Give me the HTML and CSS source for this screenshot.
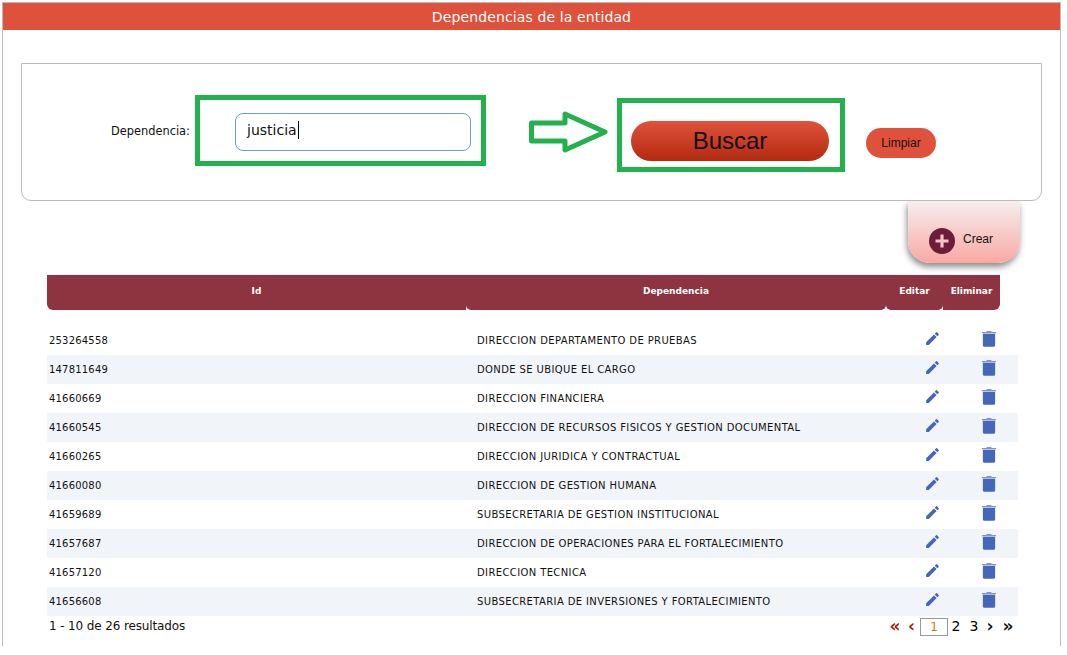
FILE: index.html
```html
<!DOCTYPE html>
<html lang="es">
<head>
<meta charset="utf-8">
<title>Dependencias de la entidad</title>
<link rel="stylesheet" href="styles.css">
</head>
<body>
<main class="frame">
  <h1 class="title">Dependencias de la entidad</h1>
  <section class="search">
    <label class="field-label" for="dep">Dependencia:</label>
    <div class="mark mark-input">
      <div class="input"><span class="input-text">justicia</span><span class="caret"></span></div>
    </div>
    <svg class="arrow" width="80" height="42" viewBox="0 0 80 42"><path d="M2.5 12H36V3L76 21 36 39V30H2.5Z" fill="#fff" stroke="#23b14d" stroke-width="5" stroke-linejoin="round"/></svg>
    <div class="mark mark-button"><button class="btn-search">Buscar</button></div>
    <button class="btn-clear">Limpiar</button>
  </section>
  <div class="create-row">
    <div class="create">
      <span class="create-icon"><svg width="26" height="26" viewBox="0 0 26 26"><circle cx="13" cy="13" r="13" fill="#6b1d3a"/><path d="M13 6.5v13M6.5 13h13" stroke="#f2c4c4" stroke-width="3.2"/></svg></span>
      <span>Crear</span>
    </div>
  </div>
  <div class="table-wrap">
    <div class="thead">
      <div class="th">Id</div>
      <div class="th">Dependencia</div>
      <div class="th">Editar</div>
      <div class="th">Eliminar</div>
    </div>
    <div class="tbody">
      <div class="tr"><span class="id">253264558</span><span class="dep">DIRECCION DEPARTAMENTO DE PRUEBAS</span><svg class="pencil" viewBox="0 0 24 24"><use href="#i-edit"/></svg><svg class="trash" viewBox="0 0 16 18"><use href="#i-trash"/></svg></div>
      <div class="tr"><span class="id">147811649</span><span class="dep">DONDE SE UBIQUE EL CARGO</span><svg class="pencil" viewBox="0 0 24 24"><use href="#i-edit"/></svg><svg class="trash" viewBox="0 0 16 18"><use href="#i-trash"/></svg></div>
      <div class="tr"><span class="id">41660669</span><span class="dep">DIRECCION FINANCIERA</span><svg class="pencil" viewBox="0 0 24 24"><use href="#i-edit"/></svg><svg class="trash" viewBox="0 0 16 18"><use href="#i-trash"/></svg></div>
      <div class="tr"><span class="id">41660545</span><span class="dep">DIRECCION DE RECURSOS FISICOS Y GESTION DOCUMENTAL</span><svg class="pencil" viewBox="0 0 24 24"><use href="#i-edit"/></svg><svg class="trash" viewBox="0 0 16 18"><use href="#i-trash"/></svg></div>
      <div class="tr"><span class="id">41660265</span><span class="dep">DIRECCION JURIDICA Y CONTRACTUAL</span><svg class="pencil" viewBox="0 0 24 24"><use href="#i-edit"/></svg><svg class="trash" viewBox="0 0 16 18"><use href="#i-trash"/></svg></div>
      <div class="tr"><span class="id">41660080</span><span class="dep">DIRECCION DE GESTION HUMANA</span><svg class="pencil" viewBox="0 0 24 24"><use href="#i-edit"/></svg><svg class="trash" viewBox="0 0 16 18"><use href="#i-trash"/></svg></div>
      <div class="tr"><span class="id">41659689</span><span class="dep">SUBSECRETARIA DE GESTION INSTITUCIONAL</span><svg class="pencil" viewBox="0 0 24 24"><use href="#i-edit"/></svg><svg class="trash" viewBox="0 0 16 18"><use href="#i-trash"/></svg></div>
      <div class="tr"><span class="id">41657687</span><span class="dep">DIRECCION DE OPERACIONES PARA EL FORTALECIMIENTO</span><svg class="pencil" viewBox="0 0 24 24"><use href="#i-edit"/></svg><svg class="trash" viewBox="0 0 16 18"><use href="#i-trash"/></svg></div>
      <div class="tr"><span class="id">41657120</span><span class="dep">DIRECCION TECNICA</span><svg class="pencil" viewBox="0 0 24 24"><use href="#i-edit"/></svg><svg class="trash" viewBox="0 0 16 18"><use href="#i-trash"/></svg></div>
      <div class="tr"><span class="id">41656608</span><span class="dep">SUBSECRETARIA DE INVERSIONES Y FORTALECIMIENTO</span><svg class="pencil" viewBox="0 0 24 24"><use href="#i-edit"/></svg><svg class="trash" viewBox="0 0 16 18"><use href="#i-trash"/></svg></div>
    </div>
    <div class="tfoot">
      <span class="count">1 - 10 de 26 resultados</span>
      <nav class="pager">
        <span class="pg pg-red">«</span>
        <span class="pg pg-red pg-prev">‹</span>
        <span class="pg-current">1</span>
        <span class="pg-num">2</span>
        <span class="pg-num pg-gap">3</span>
        <span class="pg">›</span>
        <span class="pg pg-gap">»</span>
      </nav>
    </div>
  </div>
</main>
<svg class="defs" width="0" height="0" aria-hidden="true">
  <symbol id="i-edit" viewBox="0 0 24 24"><path fill="#4467b8" d="M3 17.25V21h3.75L17.81 9.94l-3.75-3.75L3 17.25zM20.71 7.04a1 1 0 0 0 0-1.41l-2.34-2.34a1 1 0 0 0-1.41 0l-1.83 1.83 3.75 3.75 1.83-1.83z"/></symbol>
  <symbol id="i-trash" viewBox="0 0 16 18"><path fill="#8095cc" d="M0.5 2.2H5L5.8 1H10.2L11 2.2H15.5V3.4H0.5Z"/><path fill="#4467b8" d="M1.5 4H14.5V16.2C14.5 17.2 13.8 17.8 13 17.8H3C2.2 17.8 1.5 17.2 1.5 16.2Z"/></symbol>
</svg>
</body>
</html>
```

FILE: styles.css
```css
* { box-sizing: border-box; }
html, body { margin: 0; padding: 0; background: #fff; }
body { width: 1067px; height: 655px; overflow: hidden; font-family: "DejaVu Sans", Verdana, sans-serif; color: #111; }
.defs { display: block; height: 0; }
.frame { margin: 2px 0 0 2px; width: 1059px; height: 644px; border: 1px solid #bbb; border-bottom: 0; display: flex; flex-direction: column; }
.title { margin: 0; height: 27px; background: #df513b; color: #fff; font-size: 14px; font-weight: 400; line-height: 29px; letter-spacing: .12px; text-align: center; }
.search { margin: 33px 0 0 18px; width: 1021px; height: 138px; border: 1px solid #bbb; border-radius: 0 0 10px 10px; display: flex; align-items: flex-start; position: relative; z-index: 2; background: #fff; }
.field-label { margin: 59px 0 0 89px; width: 84px; font-size: 11.4px; line-height: 16px; }
.mark { border: 5px solid #23b14d; }
.mark-input { margin-top: 31px; width: 291px; height: 71px; padding: 13px 0 0 35px; }
.input { width: 236px; height: 38px; border: 1px solid #6f9fc8; border-radius: 8px; padding: 0 0 5px 11px; display: flex; align-items: center; font-size: 14px; }
.input-text { line-height: 18px; }
.caret { width: 1px; height: 18px; background: #000; margin-left: 1px; }
.arrow { margin: 47px 0 0 43px; flex: none; }
.mark-button { margin: 34px 0 0 8px; width: 228px; height: 74px; padding: 18px 0 0 9px; }
.btn-search { width: 198px; height: 40px; border: 0; border-radius: 20px; background: linear-gradient(#df513b, #b32a10); font-family: "Liberation Sans", Arial, sans-serif; font-size: 24px; color: #111; padding: 0; }
.btn-clear { margin: 64px 0 0 21px; width: 70px; height: 30px; border: 0; border-radius: 15px; background: #df513b; font-family: "Liberation Sans", Arial, sans-serif; font-size: 12px; color: #111; padding: 0; }
.create-row { display: flex; justify-content: flex-end; padding-right: 40px; height: 62px; }
.create { width: 112px; height: 62px; border-radius: 0 0 22px 22px; background: linear-gradient(#f5efef, #f9a8a3); box-shadow: -1px 4px 6px rgba(0,0,0,.45); display: flex; align-items: flex-start; padding: 27px 0 0 21px; gap: 8px; font-family: "Liberation Sans", Arial, sans-serif; font-size: 12px; line-height: 22px; }
.create-icon { display: block; height: 26px; width: 26px; flex: none; }
.create-icon svg { display: block; }
.table-wrap { margin: 12px 0 0 44px; position: relative; z-index: 1; }
.thead { display: grid; grid-template-columns: 419px 420px 57px 57px; width: 953px; height: 35px; }
.th { background: #8e3340; color: #fff; font-size: 9px; font-weight: 700; line-height: 32px; text-align: center; border-radius: 0 0 5px 5px; }
.th:first-child { border-radius: 0 0 0 6px; }
.th:last-child { border-radius: 0 0 6px 0; }
.tbody { margin-top: 16px; width: 971px; }
.tr { display: grid; grid-template-columns: 428px 446px 58px 1fr; align-items: center; height: 29px; padding-left: 2px; font-size: 10px; }
.tr:nth-child(even) { background: #f1f4f9; }
.id { letter-spacing: .2px; }
.dep { letter-spacing: .38px; white-space: nowrap; }
.pencil { width: 17px; height: 17px; display: block; align-self: start; margin: 4px 0 0 1px; }
.trash { width: 16px; height: 17px; display: block; align-self: start; margin-top: 4px; }
.tfoot { display: flex; justify-content: space-between; width: 971px; height: 28px; padding: 2px 2px 0 2px; align-items: flex-start; }
.count { font-size: 12px; line-height: 16px; letter-spacing: -.13px; }
.pager { display: flex; align-items: center; height: 20px; margin-top: -1px; }
.pg { font-size: 17px; line-height: 16px; padding-bottom: 2px; font-weight: 700; width: 16px; text-align: center; color: #111; }
.pg-red { color: #a8160f; }
.pg-prev { width: 17px; }
.pg-current { width: 28px; height: 18px; border: 1px solid #999; color: #b8860b; text-align: center; font-size: 12px; line-height: 16px; }
.pg-num { width: 16px; text-align: center; color: #000; font-size: 14px; line-height: 16px; padding-bottom: 2px; }
.pg-gap { margin-left: 2px; }
```
